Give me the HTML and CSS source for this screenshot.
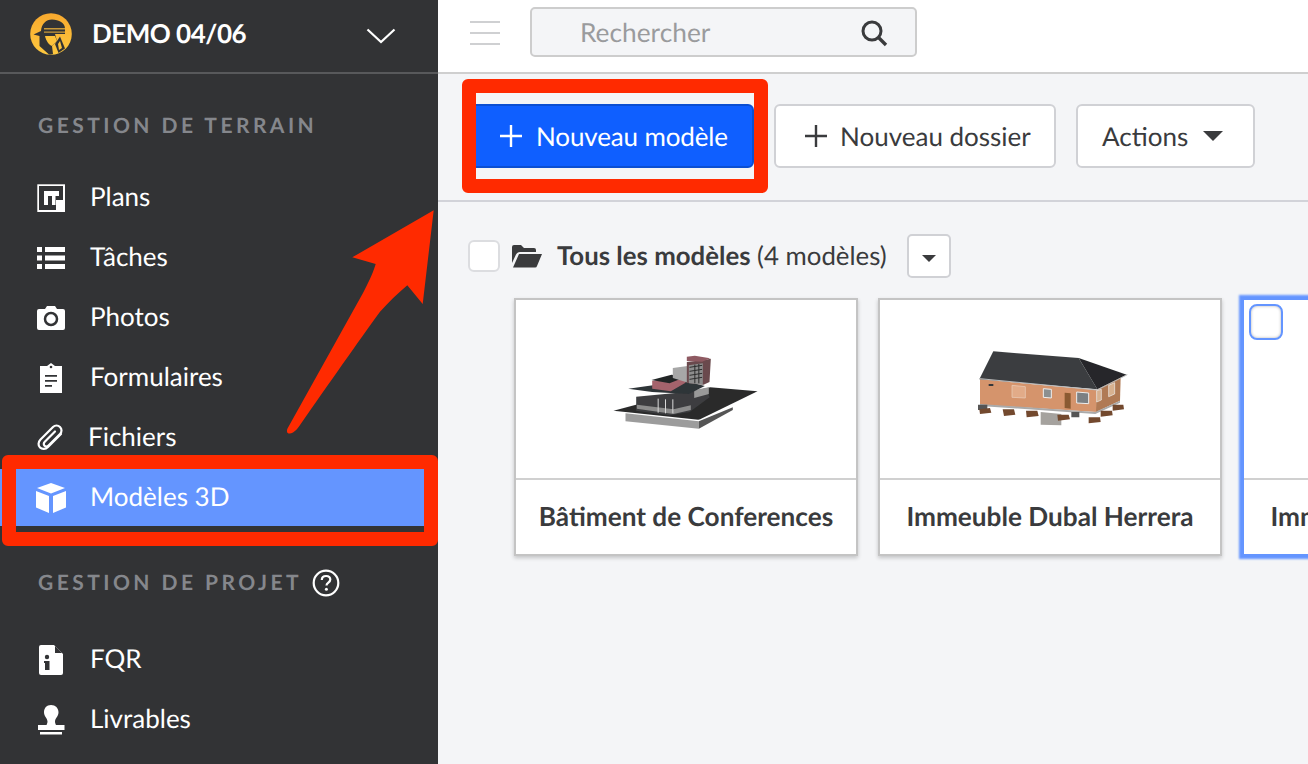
FILE: index.html
```html
<!DOCTYPE html>
<html lang="fr">
<head>
<meta charset="utf-8">
<title>Modèles 3D</title>
<link rel="stylesheet" href="styles.css">
</head>
<body>
<div class="app">
  <aside class="sidebar">
    <header class="project">
      <svg class="logo" viewBox="0 0 42 42" width="42" height="42">
        <defs><linearGradient id="lg" x1="0" y1="0" x2="0" y2="1"><stop offset="0" stop-color="#f8a92e"/><stop offset="1" stop-color="#fdc83f"/></linearGradient></defs>
        <circle cx="21" cy="21" r="20.800" fill="url(#lg)"/>
        <path d="M3.500 21.500L11 18c.5-7 5-11.500 11-11.500 7 0 13 3.500 13 9V21H25l2 7-5 5 1 8c-1.500.5-2.500.5-4 .5l-9.500-8.500v-10z" fill="#323335"/>
        <path d="M14 15h21v1.400H14zM14 18.500h21v1.200H14z" fill="#c99a3a"/>
        <path d="M15 23h10l2 5-5 5c-3-1-6-5-7-10z" fill="#fdc23b"/>
        <path d="M25 31l5-7.500 5 12-6.500 4.500z" fill="#323335"/>
        <path d="M28 31l2-3 2 7-3 2z" fill="#fdc23b"/>
      </svg>
      <span class="project-name">DEMO 04/06</span>
      <svg class="chevron" viewBox="0 0 30 16" width="30" height="16"><path d="M1.500 1.500L15 14 28.500 1.500" fill="none" stroke="#fff" stroke-width="2.200"/></svg>
    </header>

    <h2 class="section-title section-first">GESTION DE TERRAIN</h2>
    <nav class="nav nav-first">
      <a class="nav-row">
        <svg class="nav-icon" viewBox="0 0 30 30"><rect x="1.300" y="1.300" width="27.700" height="27.700" fill="#fff"/><path d="M3 3h24v14h-7v10H3z" fill="#323335"/><path d="M8 8h15v5h-3.500v9h-3.500V13h-4v9H8z" fill="#fff"/></svg>
        <span class="nav-text">Plans</span>
      </a>
      <a class="nav-row">
        <svg class="nav-icon" viewBox="0 0 30 30"><path d="M1 4h5v5H1zM9 4h20v5H9zM1 12.500h5v5H1zM9 12.500h20v5H9zM1 21h5v5H1zM9 21h20v5H9z" fill="#fff"/></svg>
        <span class="nav-text">Tâches</span>
      </a>
      <a class="nav-row">
        <svg class="nav-icon" viewBox="0 0 30 30"><path d="M3 6h6l2-3h8l2 3h6a2 2 0 0 1 2 2v17a2 2 0 0 1-2 2H3a2 2 0 0 1-2-2V8a2 2 0 0 1 2-2z" fill="#fff"/><circle cx="15" cy="16" r="6" fill="none" stroke="#323335" stroke-width="2.500"/></svg>
        <span class="nav-text">Photos</span>
      </a>
      <a class="nav-row">
        <svg class="nav-icon" viewBox="0 0 30 30"><path d="M4 3h7l4-3 4 3h7v28H4z" fill="#fff"/><path d="M9 12h12v1.800H9zM9 17h12v1.800H9zM9 22h7v1.800H9z" fill="#323335"/><circle cx="15" cy="4" r="1.300" fill="#323335"/></svg>
        <span class="nav-text">Formulaires</span>
      </a>
      <a class="nav-row nav-row-tight">
        <svg class="nav-icon" viewBox="0 0 30 30"><path d="M25 11L12 24c-2.500 2.500-6 2.500-8 .5s-2-5.500.5-8L17 4c2-2 5-2 7 0s2 5 0 7L12.500 22.500c-1.300 1.300-3 1.300-4 .3s-1-2.700.3-4L19 8.500" fill="none" stroke="#fff" stroke-width="2.200" stroke-linecap="round"/></svg>
        <span class="nav-text">Fichiers</span>
      </a>
      <a class="nav-row nav-row-active">
        <svg class="nav-icon" viewBox="0 0 30 30"><path d="M15 0l14 5-14 5.500L1 5z" fill="#fff"/><path d="M0 8l13 5v17L0 24.500zM30 8l-13 5v17l13-5.500z" fill="#fff"/></svg>
        <span class="nav-text">Modèles 3D</span>
      </a>
    </nav>

    <h2 class="section-title section-second">GESTION DE PROJET
      <svg class="help" viewBox="0 0 28 28" width="28" height="28"><circle cx="14" cy="14" r="12.300" fill="none" stroke="#fff" stroke-width="2.200"/><path d="M9.800 11c0-2.600 1.800-4 4.300-4s4.200 1.400 4.200 3.600c0 3.200-3.800 3-3.800 6" fill="none" stroke="#fff" stroke-width="2.200"/><circle cx="14.400" cy="20.300" r="1.500" fill="#fff"/></svg>
    </h2>
    <nav class="nav nav-second">
      <a class="nav-row">
        <svg class="nav-icon" viewBox="0 0 30 30"><path d="M5 0h13l9 9v19a2 2 0 0 1-2 2H5a2 2 0 0 1-2-2V2a2 2 0 0 1 2-2z" fill="#fff"/><path d="M19 1l7 7h-7z" fill="#323335"/><circle cx="11" cy="12" r="2.200" fill="#323335"/><path d="M8 16h5.500v9H9v-7H8z" fill="#323335"/></svg>
        <span class="nav-text">FQR</span>
      </a>
      <a class="nav-row">
        <svg class="nav-icon" viewBox="0 0 30 30"><path d="M15 0c4.500 0 7.500 3.200 7.500 7.200 0 4.400-3.500 6-3.500 9.300 0 1.200.5 2.500 1 3.500h8.500v5H2V20h8.500c.5-1 1-2.300 1-3.500 0-3.300-3.500-4.900-3.500-9.300C8 3.200 10.500 0 15 0z" fill="#fff"/><path d="M4 27h22v2.500H4z" fill="#fff"/></svg>
        <span class="nav-text">Livrables</span>
      </a>
    </nav>
  </aside>

  <main class="main">
    <div class="topbar">
      <div class="burger"><i></i><i></i><i></i></div>
      <div class="search">
        <span class="search-text">Rechercher</span>
        <svg class="search-icon" viewBox="0 0 28 28" width="28" height="28"><circle cx="12" cy="12" r="9" fill="none" stroke="#3a3b3d" stroke-width="3"/><path d="M18.500 18.500l7.500 7.500" stroke="#3a3b3d" stroke-width="3.400"/></svg>
      </div>
    </div>

    <div class="toolbar">
      <button class="btn btn-primary">
        <svg class="plus" viewBox="0 0 24 24" width="24" height="24"><path d="M12 1v22M1 12h22" stroke="#fff" stroke-width="2.400"/></svg>
        Nouveau modèle
      </button>
      <button class="btn btn-folder">
        <svg class="plus" viewBox="0 0 24 24" width="24" height="24"><path d="M12 1v22M1 12h22" stroke="#3a3b3d" stroke-width="2.400"/></svg>
        Nouveau dossier
      </button>
      <button class="btn btn-actions">
        Actions
        <svg viewBox="0 0 20 10" width="20" height="10"><path d="M0 0h20L10 10z" fill="#3a3b3d"/></svg>
      </button>
    </div>

    <section class="content">
      <div class="folder-row">
        <span class="check"></span>
        <svg class="folder-icon" viewBox="0 0 30 24" width="30" height="24"><path d="M0 3a2 2 0 0 1 2-2h7l3 3h10a2 2 0 0 1 2 2v2H8c-2 0-3 1-4 2.500L0 19z" fill="#3a3b3d"/><path d="M7 10h23l-5 12a2 2 0 0 1-2 1.500H1z" fill="#3a3b3d"/></svg>
        <span class="folder-label"><b>Tous les modèles</b> (4 modèles)</span>
        <button class="mini-btn"><svg viewBox="0 0 14 7" width="14" height="7"><path d="M0 0h14L7 7z" fill="#3a3b3d"/></svg></button>
      </div>

      <div class="cards">
        <article class="card">
          <div class="thumb">
            <svg viewBox="19.500 -3 540 300" width="180" height="100">
              <defs><filter id="soft"><feGaussianBlur stdDeviation="1.500"/></filter></defs>
              <g filter="url(#soft)">
              <path d="M108 220l220 24v22l-220-22z" fill="#9c9c9c"/>
              <path d="M328 244l102-42v8l-102 56z" fill="#555"/>
              <path d="M72 212l90-24 200-46 142 12-172 84-6 1z" fill="#2a2b2c"/>
              <path d="M140 170l212-20 8 22-60 44-60 10-100-14z" fill="#3d3e40"/>
              <path d="M142 194l110 14 52-12v14l-52 12-110-16z" fill="#8c8c8c"/>
              <path d="M206 176v42M228 178v42M250 178v42" stroke="#d8d8d8" stroke-width="3"/>
              <path d="M314 150l44-8v20l-44 12z" fill="#999"/>
              <path d="M116 146l170-24 60 16-48 24-110-6z" fill="#2f3438"/>
              <path d="M188 122l100-8v14l-44 26-56-8z" fill="#a4646c"/>
              <path d="M186 120l60-16 44 6-50 20z" fill="#222528"/>
              <path d="M250 84l44-6 2 50-46-14z" fill="#a7a7a7"/>
              <path d="M292 66l50-6 22-4-4 70-18 8-50-6z" fill="#6b4a4d"/>
              <path d="M292 50l24-3 46 8-24 10-46-2z" fill="#8f5a62"/>
              <path d="M298 76l42-6v64l-42-4z" fill="#8d8d8d"/>
              <path d="M300 82l38-6M300 94l38-6M300 106l38-6M300 118l38-6M316 74v56M328 72v58" stroke="#2d2d2d" stroke-width="3"/>
              </g>
            </svg>
          </div>
          <h3 class="card-title">Bâtiment de Conferences</h3>
        </article>
        <article class="card">
          <div class="thumb">
            <svg viewBox="0 -3 540 300" width="180" height="100">
              <g filter="url(#soft)">
              <path d="M60 118l350 32v66L60 194z" fill="#d5946c"/>
              <path d="M410 150l72-38-2 70-72 34z" fill="#b07a54"/>
              <path d="M58 118L100 34l256 20 56 94z" fill="#3b3e41"/>
              <path d="M356 54l144 50-88 44z" fill="#26282a"/>
              <path d="M60 116l352 34M412 150l90-46" stroke="#bbb" stroke-width="3" fill="none"/>
              <path d="M156 136l40 4v34l-40-2z" fill="#e2ab88" stroke="#ecd2bf" stroke-width="2"/>
              <path d="M250 146l24 2v26l-24-2z" fill="#8b8f90" stroke="#eee" stroke-width="3"/>
              <path d="M314 158l18 2v46l-18-2z" fill="#8a5a30"/>
              <path d="M350 156l36 3v32l-36-2z" fill="#7b8083" stroke="#eee" stroke-width="3"/>
              <path d="M410 152l14-4v32l-14 6zM446 136l18-8v34l-18 8z" fill="#d7b190" stroke="#eee" stroke-width="2"/>
              <path d="M86 132h14v6H86z" fill="#34373a"/>
              <path d="M60 192l346 24 74-34v6l-74 34-346-24z" fill="#aaa"/>
              <path d="M242 216l62 6v34l-62-2z" fill="#a5a29e"/>
              <path d="M54 194h28v16H54zM334 216h24v16h-24z" fill="#555"/>
              <path d="M58 208l32-4 4 14-34 4zM128 208h34l4 16-34 4zM198 212h34l4 16-36 4zM292 224h34l4 14-36 4zM386 232h34l2 14-36 4zM422 212h34l2 14-36 4zM458 194h32l2 14-34 4z" fill="#73492f"/>
              </g>
            </svg>
          </div>
          <h3 class="card-title">Immeuble Dubal Herrera</h3>
        </article>
        <article class="card card-focus">
          <span class="check check-focus"></span>
          <div class="thumb"></div>
          <h3 class="card-title">Immeuble Dubal Herrera</h3>
        </article>
      </div>
    </section>
  </main>
</div>

<div class="mark mark-nav"></div>
<div class="mark mark-button"></div>
<svg class="arrow" viewBox="0 0 160 240" width="160" height="240">
  <path d="M153.700 10.300L72.300 57.300 95.700 64C92 76 88 83 83 93L7.500 228.500C5.500 233 9 235 13 232.500 16 230.500 17 229 19 226.500 50 182 78 142 100 111.700 108 103 118 93 127.300 85.300L142.700 104z" fill="#ff2a00"/>
</svg>
</body>
</html>
```

FILE: styles.css
```css
* { box-sizing: border-box; }
html, body { margin: 0; height: 100%; overflow: hidden; }
body { font-family: Lato, "Liberation Sans", sans-serif; color: #3a3b3d; background: #f4f5f7; text-rendering: geometricPrecision; }
.app { display: flex; width: 1308px; height: 764px; overflow: hidden; }

.sidebar { flex: 0 0 438px; background: #323335; color: #fff; display: flex; flex-direction: column; }
.project { height: 74px; flex: none; display: flex; align-items: center; padding: 0 42px 4px 30px; border-bottom: 2px solid #58595b; }
.logo { flex: none; }
.project-name { font-size: 26px; font-weight: 700; letter-spacing: -.5px; margin-left: 20px; flex: 1; padding-bottom: 2px; }
.chevron { flex: none; margin-top: 4px; }

.section-title { margin: 0; font-size: 21px; font-weight: 700; letter-spacing: 3.45px; color: #85878c; display: flex; align-items: center; line-height: 28px; padding-left: 38px; white-space: nowrap; }
.section-first { margin-top: 38px; }
.section-second { margin-top: 43px; }
.help { margin-left: 10px; }

.nav { display: flex; flex-direction: column; gap: 3px; }
.nav-first { margin-top: 29px; }
.nav-second { margin-top: 34px; }
.nav-row { height: 57px; display: flex; align-items: center; padding-left: 36px; font-size: 26px; color: #fff; gap: 24px; }
.nav-text { margin-bottom: 4px; }
.nav-row-tight { gap: 22px; }
.nav-row-active { background: #6495ff; }
.nav-icon { width: 30px; height: 30px; flex: none; }

.main { flex: 1; min-width: 0; display: flex; flex-direction: column; }
.topbar { height: 74px; flex: none; background: #fff; border-bottom: 2px solid #cfcfcf; display: flex; align-items: flex-start; padding: 7px 0 0 32px; }
.burger { width: 30px; height: 24px; margin-top: 14px; display: flex; flex-direction: column; justify-content: space-between; }
.burger i { display: block; height: 2px; background: #cfd0d2; }
.search { width: 387px; height: 50px; margin-left: 30px; background: #f4f5f7; border: 2px solid #cdcdcd; border-radius: 5px; display: flex; align-items: center; justify-content: space-between; padding: 0 27px 0 48px; }
.search-text { font-size: 26.300px; color: #9a9b9d; }
.search-icon { margin-top: 2px; }

.toolbar { height: 128px; flex: none; border-bottom: 2px solid #d2d3d9; display: flex; align-items: flex-start; gap: 20px; padding: 30px 0 0 26px; }
.btn { height: 64px; border: 2px solid #d0d1d5; border-radius: 6px; background: #fff; font: 400 26px Lato, "Liberation Sans", sans-serif; color: #3a3b3d; display: flex; align-items: center; white-space: nowrap; text-rendering: geometricPrecision; }
.btn-primary { width: 290px; background: #0f5fff; border-color: #0b4fd2; color: #fff; padding: 0 0 0 33px; gap: 13px; letter-spacing: -.14px; }
.btn-folder { width: 282px; padding: 0 0 0 28px; gap: 12px; }
.btn-actions { width: 179px; padding: 0 0 0 24px; gap: 15px; }

.content { flex: 1; padding: 32px 0 0 30px; min-height: 0; }
.folder-row { display: flex; align-items: center; height: 44px; }
.check { display: block; width: 32px; height: 32px; background: #fff; border: 2px solid #dcdde0; border-radius: 6px; flex: none; }
.folder-icon { margin-left: 12px; flex: none; }
.folder-label { font-size: 25.800px; margin-left: 15px; white-space: nowrap; }
.folder-label b { font-weight: 700; }
.mini-btn { width: 44px; height: 44px; margin-left: 20px; background: #fff; border: 2px solid #d0d1d5; border-radius: 5px; padding: 4px 0 0; display: flex; align-items: center; justify-content: center; }

.cards { display: flex; gap: 20px; margin-top: 20px; margin-left: 46px; }
.card { position: relative; flex: 0 0 344px; height: 258px; background: #fff; border: 2px solid #c4c4c4; box-shadow: 0 2px 4px rgba(0,0,0,.2); display: flex; flex-direction: column; }
.thumb { height: 180px; flex: none; display: flex; align-items: center; justify-content: center; border-bottom: 2px solid #d0d0d0; overflow: hidden; }
.card-title { flex: 1; margin: 0; padding-bottom: 2px; display: flex; align-items: center; justify-content: center; font-size: 26.200px; font-weight: 700; color: #3a3b3d; white-space: nowrap; }
.card-focus { border-color: #6495ff; box-shadow: 0 0 2px 3px #6495ff; }
.check-focus { position: absolute; top: 4px; left: 5px; width: 34px; height: 36px; border-color: #6495ff; box-shadow: inset 0 0 3px rgba(0,0,0,.3); border-radius: 8px; }

.mark { position: absolute; border: 14px solid #ff2a00; border-radius: 6px; pointer-events: none; }
.mark-nav { left: 2px; top: 455px; width: 436px; height: 91px; }
.mark-button { left: 462px; top: 79px; width: 306px; height: 114px; }
.arrow { position: absolute; left: 280px; top: 200px; }
```
